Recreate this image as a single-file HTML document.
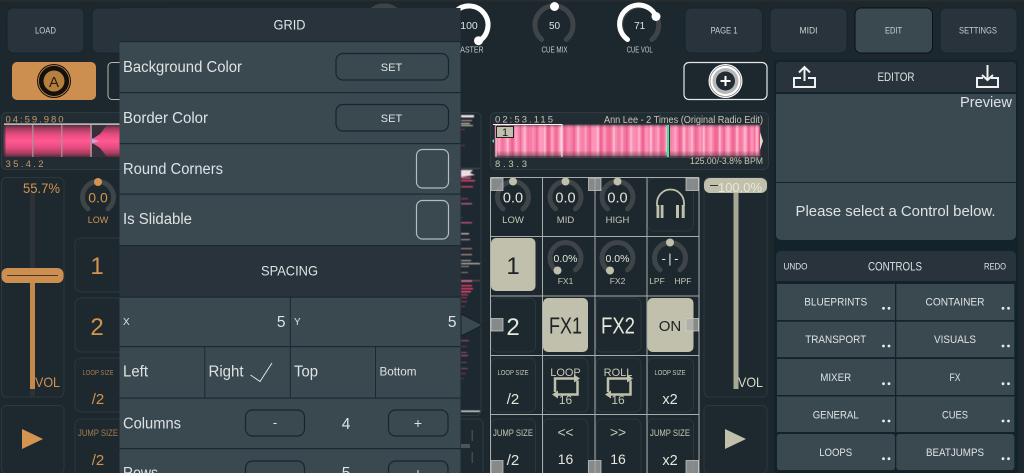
<!DOCTYPE html>
<html><head><meta charset="utf-8"><style>
html,body{margin:0;padding:0;background:#1c272e;width:1024px;height:473px;overflow:hidden}
svg{display:block;font-family:"Liberation Sans",sans-serif}
text{text-anchor:middle;fill:#dde3e3}
.l{text-anchor:start}.r{text-anchor:end}
.o{fill:#d49350}.c{fill:#c6c7b4}
.b{fill:#1e292f;stroke:#2c383e;stroke-width:1}
.t{fill:#29333b;stroke:#15242c;stroke-width:1}
.tt{fill:#c9cfd0;font-size:9.500px}
.sep{fill:#1a2a33}
.cell{fill:#3a4850}
.h{fill:#a9abaa;fill-opacity:.75;stroke:#d0d2cc;stroke-opacity:.7;stroke-width:1}
.ln{stroke:#a8adab;stroke-width:1;fill:none}
.d{fill:#e8ecec}
</style></head><body>
<svg xmlns="http://www.w3.org/2000/svg" width="1024" height="473" viewBox="0 0 1024 473">
<defs>
<linearGradient id="wv" x1="0" y1="0" x2="0" y2="1"><stop offset="0" stop-color="#5a2c3c"/><stop offset=".12" stop-color="#a83e60"/><stop offset=".3" stop-color="#e84c80"/><stop offset=".5" stop-color="#ff5a92"/><stop offset=".7" stop-color="#e84c80"/><stop offset=".88" stop-color="#a83e60"/><stop offset="1" stop-color="#5a2c3c"/></linearGradient>
<linearGradient id="fade" x1="0" y1="0" x2="0" y2="1"><stop offset="0" stop-color="#4a2a38" stop-opacity=".35"/><stop offset=".1" stop-color="#3a2a33" stop-opacity="0"/><stop offset=".8" stop-color="#000" stop-opacity="0"/><stop offset=".93" stop-color="#3a2a33" stop-opacity=".35"/><stop offset="1" stop-color="#2a2228" stop-opacity=".75"/></linearGradient>
<filter id="bl" x="-2%" y="-2%" width="104%" height="104%"><feGaussianBlur stdDeviation=".6"/></filter>
<pattern id="st" width="53" height="40" patternUnits="userSpaceOnUse">
<rect width="53" height="40" fill="#f97fab"/>
<rect x="2" width="2" height="40" fill="#ffb0cb"/><rect x="6" width="1.500" height="40" fill="#ec5f8a"/><rect x="9" width="3" height="40" fill="#ff95b9"/><rect x="14" width="1.500" height="40" fill="#ffc4d6"/><rect x="17" width="2" height="40" fill="#ee5c8a"/><rect x="21" width="2" height="40" fill="#ffa8c5"/><rect x="25" width="3" height="40" fill="#f36a92"/><rect x="30" width="1.500" height="40" fill="#ffc4d6"/><rect x="34" width="2" height="40" fill="#ea6490"/><rect x="38" width="2.500" height="40" fill="#ffa5c3"/><rect x="43" width="1.500" height="40" fill="#e65a82"/><rect x="47" width="2" height="40" fill="#ffb8ce"/><rect x="51" width="1" height="40" fill="#ec7288"/>
</pattern>
<pattern id="st2" width="37" height="40" patternUnits="userSpaceOnUse">
<rect x="3" width="4" height="40" fill="#ffd0de" fill-opacity=".25"/><rect x="13" width="3" height="40" fill="#e04a72" fill-opacity=".25"/><rect x="22" width="5" height="40" fill="#ffd0de" fill-opacity=".2"/><rect x="31" width="2" height="40" fill="#d85070" fill-opacity=".3"/>
</pattern>
<g id="k"><path d="M-10 11.900A15.500 15.500 0 1 1 10 11.900" fill="none" stroke="#3e4447" stroke-width="5" stroke-linecap="round"/></g>
<g id="K"><path d="M-12.200 14.500A19 19 0 1 1 12.200 14.500" fill="none" stroke="#3e4447" stroke-width="5" stroke-linecap="round"/></g>
</defs>

<rect width="1024" height="473" fill="#1c272e"/>
<rect width="1024" height="1.500" fill="#2a2d2e"/>

<!-- top buttons -->
<rect class="t" x="7" y="8" width="77" height="45" rx="6"/><text class="tt" x="45.500" y="33.500" textLength="21" lengthAdjust="spacingAndGlyphs">LOAD</text>
<rect class="t" x="92" y="8" width="77" height="45" rx="6"/>
<rect class="t" x="685" y="8" width="77.500" height="45" rx="6"/><text class="tt" x="724" y="33.500" textLength="27" lengthAdjust="spacingAndGlyphs">PAGE 1</text>
<rect class="t" x="770" y="8" width="77" height="45" rx="6"/><text class="tt" x="808.500" y="33.500" textLength="18" lengthAdjust="spacingAndGlyphs">MIDI</text>
<rect x="855" y="8" width="77.500" height="45" rx="6" fill="#3a4850" stroke="#0c1216"/><text class="tt" x="893.500" y="33.500" textLength="17" lengthAdjust="spacingAndGlyphs">EDIT</text>
<rect class="t" x="940" y="8" width="77" height="45" rx="6"/><text class="tt" x="978" y="33.500" textLength="38" lengthAdjust="spacingAndGlyphs">SETTINGS</text>

<!-- top knobs -->
<use href="#K" x="384" y="25"/>
<use href="#K" x="469" y="25"/>
<path d="M456.800 39.500A19 19 0 1 1 478 41.700" fill="none" stroke="#fff" stroke-width="5" stroke-linecap="round"/>
<circle cx="478.500" cy="40.700" r="4.500" fill="#fff"/>
<text x="469" y="29" font-size="10.500">100</text><text x="469" y="52.500" font-size="8.500" textLength="29" lengthAdjust="spacingAndGlyphs" style="fill:#c9cfd0">MASTER</text>
<use href="#K" x="554" y="25"/><circle cx="554.500" cy="6.500" r="4.500" fill="#fff"/>
<text x="554.500" y="29" font-size="10">50</text><text x="554.500" y="52.500" font-size="8.500" textLength="26" lengthAdjust="spacingAndGlyphs" style="fill:#c9cfd0">CUE MIX</text>
<use href="#K" x="639.700" y="25"/>
<path d="M627.500 39.500A19 19 0 1 1 656 16.500" fill="none" stroke="#fff" stroke-width="5" stroke-linecap="round"/>
<circle cx="656" cy="16.500" r="4.500" fill="#fff"/>
<text x="639.700" y="29" font-size="10">71</text><text x="639.700" y="52.500" font-size="8.500" textLength="26" lengthAdjust="spacingAndGlyphs" style="fill:#c9cfd0">CUE VOL</text>

<!-- deck buttons -->
<rect x="12" y="62" width="84" height="38" rx="5" fill="#cd8f4f"/>
<circle cx="54" cy="81" r="17" fill="#14100c"/><circle cx="54" cy="81" r="15.500" fill="none" stroke="#cd8f4f" stroke-width=".8"/><circle cx="54" cy="81" r="10.500" fill="#b5803f"/>
<text x="54" y="87" font-size="15" style="fill:#2a1c10">A</text>
<rect x="108" y="62.500" width="30" height="37" rx="4" fill="none" stroke="#b9b9a6"/>
<rect x="684" y="62.500" width="83" height="37" rx="5" fill="#1c272e" stroke="#e6e8e8" stroke-width="1.200"/>
<circle cx="725.500" cy="81" r="17" fill="#fff"/><circle cx="725.500" cy="81" r="15.500" fill="none" stroke="#888" stroke-width=".8"/><circle cx="725.500" cy="81" r="13" fill="#b8b8b8"/><circle cx="725.500" cy="81" r="9.500" fill="#222c32"/>
<path d="M725.500 76V86M720.500 81H730.500" stroke="#fff" stroke-width="2"/>

<!-- left waveform -->
<rect x="1.500" y="112.500" width="125" height="57" rx="5" fill="#222d33" stroke="#2f3a40"/>
<rect x="3.500" y="125" width="116" height="32" fill="url(#wv)"/>
<rect x="3.500" y="125" width="2" height="32" fill="#222d33" fill-opacity=".6"/>
<path d="M92 125H107L100 134L93 138.500H92Z" fill="#35303a"/><path d="M92 157H107L100 148L93 143.500H92Z" fill="#35303a"/><path d="M92 138.500L99 141L92 143.500Z" fill="#c4a8e0"/>
<rect x="32.200" y="125" width="1.200" height="32" fill="#a8949c"/><rect x="61.200" y="125" width="1.200" height="32" fill="#a8949c"/><rect x="90.200" y="125" width="1.500" height="32" fill="#a8949c"/>
<rect x="4" y="123.500" width="116" height="1.200" fill="#f0f0f0"/>
<text class="l" x="5.500" y="122.500" font-size="9.500" textLength="58" style="fill:#c79a68">04:59.980</text>
<text class="l" x="5.500" y="167" font-size="9.500" textLength="38" style="fill:#c79a68">35.4.2</text>

<!-- left fader -->
<rect class="b" x="1.500" y="177.500" width="62.500" height="219.500" rx="5"/>
<rect x="30" y="192" width="5" height="205" fill="#2c3236"/>
<rect x="30" y="283" width="5" height="106" fill="#c4894b"/>
<rect x="1.500" y="268" width="62" height="15" rx="6" fill="#cd8f4f"/><rect x="7" y="275" width="51" height="1" fill="#4a3622"/>
<text class="r o" x="60" y="193" font-size="14" textLength="37" lengthAdjust="spacingAndGlyphs">55.7%</text>
<text class="r o" x="60" y="387" font-size="14" textLength="25" lengthAdjust="spacingAndGlyphs">VOL</text>
<rect class="b" x="1.500" y="405.500" width="62.500" height="68" rx="5"/>
<path d="M22 429V449L43 439Z" fill="#d49350"/>

<!-- left column -->
<use href="#k" x="98" y="197"/><circle cx="98" cy="182" r="4" fill="#d49350"/>
<text class="o" x="98" y="202.500" font-size="14">0.0</text><text class="o" x="98" y="223" font-size="9">LOW</text>
<rect class="b" x="75" y="238" width="50" height="54" rx="6"/><text class="o" x="97" y="274" font-size="24">1</text>
<rect class="b" x="75" y="298" width="50" height="54" rx="6"/><text class="o" x="97" y="335" font-size="24">2</text>
<rect class="b" x="75" y="358" width="50" height="54" rx="6"/><text x="98" y="375" font-size="7.500" textLength="31" lengthAdjust="spacingAndGlyphs" style="fill:#a57d50">LOOP SIZE</text><text class="o" x="98" y="404" font-size="15">/2</text>
<rect class="b" x="75" y="419" width="50" height="60" rx="6"/><text x="98" y="436" font-size="9.500" textLength="40" lengthAdjust="spacingAndGlyphs" style="fill:#a57d50">JUMP SIZE</text><text class="o" x="98" y="465" font-size="15">/2</text>

<!-- vertical strip -->
<rect x="450" y="112.500" width="31" height="303" rx="5" fill="#1d2830" stroke="#2f3a40"/>
<g filter="url(#bl)">
<rect x="461" y="115" width="13" height="2.500" fill="#e8e0e2"/><rect x="461" y="120" width="11" height="1.200" fill="#c08a9e"/><rect x="461" y="123" width="9" height="1.200" fill="#cfc0b4"/><rect x="461" y="125" width="12" height="1.200" fill="#b8b89c"/><rect x="461" y="129" width="4" height="1" fill="#7a3f55"/><rect x="461" y="145" width="4" height="1" fill="#6a3a4c"/>
<rect x="461" y="168" width="19" height="1" fill="#4a4f52"/><path d="M461 170H473L470 173L475 175L461 177Z" fill="#f2dbe6"/><rect x="461" y="177" width="10" height="2" fill="#b04d70"/><rect x="461" y="180" width="14" height="1.500" fill="#e83c62"/><rect x="461" y="186" width="12" height="1.500" fill="#bc4668"/>
<rect x="461" y="198" width="7" height="1.500" fill="#7a3a55"/><rect x="461" y="203" width="11" height="1.500" fill="#b0587c"/><rect x="461" y="217" width="2" height="1" fill="#5a3a4a"/><rect x="461" y="222" width="11" height="1.500" fill="#b84e7c"/>
<rect x="461" y="233" width="8" height="1.500" fill="#b8b09c"/><rect x="461" y="239" width="9" height="1.200" fill="#b08c94"/><rect x="461" y="248" width="11" height="1.200" fill="#b0788e"/><rect x="461" y="254" width="11" height="1.200" fill="#bc9484"/><rect x="461" y="260" width="10" height="1.200" fill="#b4a490"/><rect x="461" y="263" width="19" height="1.200" fill="#c4c6bc"/><rect x="461" y="266" width="8" height="1" fill="#a8947e"/><rect x="461" y="272" width="7" height="1" fill="#9a8072"/>
<rect x="461" y="280" width="19" height="1.500" fill="#5c4450"/><rect x="461" y="280" width="11" height="2" fill="#c26a8a"/><rect x="461" y="285" width="11" height="1.500" fill="#f0365c"/><rect x="461" y="288" width="12" height="1.500" fill="#e83c64"/><rect x="461" y="291" width="10" height="1.500" fill="#e84e78"/><rect x="461" y="294" width="7" height="1.500" fill="#a83a5a"/><rect x="461" y="297" width="6" height="1.500" fill="#7a3550"/><rect x="461" y="301" width="6" height="1.200" fill="#8a3a58"/><rect x="461" y="306" width="4" height="1" fill="#7a3a55"/>
<rect x="461" y="340" width="8" height="1.200" fill="#a0466a"/><rect x="461" y="346" width="6" height="1" fill="#6a3a4c"/><rect x="461" y="352" width="6" height="1" fill="#9a4a6a"/><rect x="461" y="355" width="7" height="1.200" fill="#a84f72"/><rect x="461" y="362" width="6" height="1" fill="#8a4060"/><rect x="461" y="368" width="7" height="1" fill="#9a4a6a"/><rect x="461" y="373" width="5" height="1" fill="#7a3a55"/><rect x="461" y="378" width="3" height="1" fill="#5a3a4a"/>
<rect x="461" y="410.500" width="19" height="1.500" fill="#d4d6d0"/>
</g>
<path d="M461 314L483 325L461 336Z" fill="#3a4850" stroke="#14232b" stroke-width="1"/>
<rect x="455" y="419" width="28" height="60" rx="5" fill="#1e292f" stroke="#2f3b41"/>
<rect x="471.500" y="430" width="1.500" height="11" fill="#44494c"/><rect x="471.500" y="452" width="1.500" height="11" fill="#44494c"/><rect x="461" y="444" width="9" height="4" fill="#4d5458"/>

<!-- right waveform -->
<rect x="490.500" y="112.500" width="278" height="57" rx="5" fill="#222d33" stroke="#2f3a40"/>
<g filter="url(#bl)"><rect x="495" y="125" width="265" height="32" fill="url(#st)"/><rect x="495" y="125" width="265" height="32" fill="url(#st2)"/></g>
<rect x="495" y="125" width="265" height="32" fill="url(#fade)"/>
<rect x="667" y="125" width="2" height="32" fill="#43e59a"/><rect x="669" y="125" width="1" height="32" fill="#26343a"/>
<path d="M760 132L763 141L760 150Z" fill="#e8d8c8"/><path d="M494 139L492 141L494 143Z" fill="#6fd0d8"/>
<rect x="495.500" y="124" width="1" height="33" fill="#e6e6e0"/><rect x="561.500" y="124" width="1" height="33" fill="#f4f4f0"/><rect x="493" y="124" width="69" height="1" fill="#f4f4f0"/>
<rect x="496.500" y="126.500" width="17" height="11" fill="#c0c0ac" stroke="#222"/><text x="505" y="136" font-size="11" style="fill:#1a1e20">1</text>
<text class="l c" x="495" y="122.500" font-size="9.500" textLength="58">02:53.115</text>
<text class="r c" x="763" y="123" font-size="10" textLength="159" lengthAdjust="spacingAndGlyphs">Ann Lee - 2 Times (Original Radio Edit)</text>
<text class="l c" x="495" y="167" font-size="9.500" textLength="32">8.3.3</text>
<text class="r c" x="763" y="164" font-size="9" textLength="73" lengthAdjust="spacingAndGlyphs">125.00/-3.8% BPM</text>

<!-- right grid -->
<use href="#k" x="513" y="197"/><circle cx="513" cy="181.500" r="4" fill="#c0c0ac"/><text x="513" y="202.500" font-size="14.500" style="fill:#e4e6da">0.0</text><text class="c" x="513" y="223" font-size="9.500">LOW</text>
<use href="#k" x="565.500" y="197"/><circle cx="565.500" cy="181.500" r="4" fill="#c0c0ac"/><text x="565.500" y="202.500" font-size="14.500" style="fill:#e4e6da">0.0</text><text class="c" x="565.500" y="223" font-size="9.500">MID</text>
<use href="#k" x="617.500" y="197"/><circle cx="617.500" cy="181.500" r="4" fill="#c0c0ac"/><text x="617.500" y="202.500" font-size="14.500" style="fill:#e4e6da">0.0</text><text class="c" x="617.500" y="223" font-size="9.500">HIGH</text>
<rect class="b" x="647.500" y="178" width="46" height="53" rx="6"/>
<path d="M657 206V203A13.500 13.500 0 0 1 684 203V206" fill="none" stroke="#c0c0ac" stroke-width="1.800"/>
<rect x="656.500" y="205" width="2.800" height="13" fill="#c0c0ac"/><rect x="660.700" y="205" width="2.800" height="13" fill="#c0c0ac"/><rect x="676" y="205" width="3" height="13" fill="#c0c0ac"/><rect x="681.700" y="205" width="3" height="13" fill="#c0c0ac"/>

<rect x="491" y="238" width="44.500" height="53" rx="5" fill="#c0c0ac"/><text x="513" y="274" font-size="24" style="fill:#1c2226">1</text>
<use href="#k" x="565.500" y="258"/><circle cx="557.500" cy="270.500" r="4" fill="#c0c0ac"/><text x="565.500" y="262" font-size="10.500" style="fill:#e4e6da">0.0%</text><text class="c" x="565.500" y="284" font-size="8.500">FX1</text>
<use href="#k" x="617.500" y="258"/><circle cx="610" cy="270.500" r="4" fill="#c0c0ac"/><text x="617.500" y="262" font-size="10.500" style="fill:#e4e6da">0.0%</text><text class="c" x="617.500" y="284" font-size="8.500">FX2</text>
<use href="#k" x="670" y="258"/><circle cx="670" cy="242.500" r="4" fill="#c0c0ac"/><text x="670" y="263" font-size="13" textLength="17" style="fill:#e4e6da">-|-</text><text class="c" x="657" y="284" font-size="8.500">LPF</text><text class="c" x="683" y="284" font-size="8.500">HPF</text>

<rect class="b" x="491" y="298" width="44.500" height="54" rx="6"/><text x="513" y="335" font-size="24" style="fill:#e6e8da">2</text>
<rect x="543" y="298" width="45" height="54" rx="5" fill="#c0c0ac"/><text x="565.500" y="333.500" font-size="23" textLength="33" lengthAdjust="spacingAndGlyphs" style="fill:#1c2226">FX1</text>
<rect class="b" x="596" y="298" width="45" height="54" rx="6"/><text x="618" y="333.500" font-size="23" textLength="34" lengthAdjust="spacingAndGlyphs" style="fill:#e6e8da">FX2</text>
<rect x="647.500" y="298" width="46" height="54" rx="5" fill="#c0c0ac"/><text x="670" y="331" font-size="15" style="fill:#1c2226">ON</text>

<rect class="b" x="491" y="358" width="44.500" height="54" rx="6"/><text class="c" x="513" y="375" font-size="7.500" textLength="31" lengthAdjust="spacingAndGlyphs">LOOP SIZE</text><text x="513" y="404" font-size="15" style="fill:#e4e6da">/2</text>
<rect class="b" x="543" y="358" width="45" height="54" rx="6"/><text class="c" x="565.500" y="376" font-size="11">LOOP</text><text class="c" x="565.500" y="404" font-size="12">16</text>
<rect class="b" x="596" y="358" width="45" height="54" rx="6"/><text class="c" x="618" y="376" font-size="11">ROLL</text><text class="c" x="618" y="404" font-size="12">16</text>
<rect class="b" x="647.500" y="358" width="46" height="54" rx="6"/><text class="c" x="670" y="375" font-size="7.500" textLength="31" lengthAdjust="spacingAndGlyphs">LOOP SIZE</text><text x="670" y="404" font-size="14.500" style="fill:#e4e6da">x2</text>
<g fill="none" stroke="#c0c0ac" stroke-width="2.500"><path d="M555 392V378.500H575"/><path d="M577.500 380.500V394.500H557"/><path d="M608 392V378.500H628"/><path d="M630.500 380.500V394.500H610"/></g>
<g fill="#c0c0ac"><path d="M574 374.500L580 378.500L574 382.500Z"/><path d="M558 390.500L552 394.500L558 398.500Z"/><path d="M627 374.500L633 378.500L627 382.500Z"/><path d="M611 390.500L605 394.500L611 398.500Z"/></g>

<rect class="b" x="491" y="419" width="44.500" height="60" rx="6"/><text class="c" x="513" y="436" font-size="9.500" textLength="40" lengthAdjust="spacingAndGlyphs">JUMP SIZE</text><text x="513" y="465" font-size="15" style="fill:#e4e6da">/2</text>
<rect class="b" x="543" y="419" width="45" height="60" rx="6"/><text class="c" x="565.500" y="437" font-size="14" textLength="16">&lt;&lt;</text><text x="565.500" y="464" font-size="14" style="fill:#e4e6da">16</text>
<rect class="b" x="596" y="419" width="45" height="60" rx="6"/><text class="c" x="618" y="437" font-size="14" textLength="16">&gt;&gt;</text><text x="618" y="464" font-size="14" style="fill:#e4e6da">16</text>
<rect class="b" x="647.500" y="419" width="46" height="60" rx="6"/><text class="c" x="670" y="436" font-size="9.500" textLength="40" lengthAdjust="spacingAndGlyphs">JUMP SIZE</text><text x="670" y="465" font-size="14.500" style="fill:#e4e6da">x2</text>

<g class="ln">
<path d="M490.500 177.500H699M490.500 236.500H699M490.500 296H699M490.500 355.500H699M490.500 414.500H699"/>
<path d="M490.500 177.500V473M542.500 177.500V473M595 177.500V473M647 177.500V473M699 177.500V473"/>
</g>
<rect class="h" x="491" y="178" width="12" height="12.500"/><rect class="h" x="588.500" y="178" width="12.500" height="12.500"/><rect class="h" x="686" y="178" width="12.500" height="12.500"/>
<rect class="h" x="491" y="318.500" width="12" height="12.500"/><rect class="h" x="686" y="318.500" width="12.500" height="12.500"/>
<rect class="h" x="491" y="460.500" width="12" height="13"/><rect class="h" x="588.500" y="460.500" width="12.500" height="13"/><rect class="h" x="686" y="460.500" width="12.500" height="13"/>

<!-- right fader -->
<rect class="b" x="704" y="177.500" width="63" height="219.500" rx="5"/>
<rect x="733.500" y="192" width="5" height="197" fill="#a8a896"/>
<rect x="704" y="178" width="63" height="15" rx="6" fill="#c0c0ac"/><rect x="710" y="185" width="8" height="1" fill="#333"/>
<text x="740" y="192" font-size="13" textLength="44" lengthAdjust="spacingAndGlyphs" style="fill:#e6e8da">100.0%</text>
<text class="r" x="763" y="387" font-size="14" textLength="25" lengthAdjust="spacingAndGlyphs" style="fill:#d8dacc">VOL</text>
<rect class="b" x="704" y="405.500" width="63" height="68" rx="5"/>
<path d="M725 429V449L746 439Z" fill="#c0c0ac"/>

<!-- editor -->
<rect x="774" y="60" width="244" height="413" fill="#13232b"/>
<path d="M776 92V66a4 4 0 0 1 4-4H1012a4 4 0 0 1 4 4V92Z" fill="#29333b"/>
<rect x="776" y="94" width="240" height="88" fill="#3a4850"/>
<path d="M776 183H1016V235a5 5 0 0 1-5 5H781a5 5 0 0 1-5-5Z" fill="#3a4850"/>
<text x="896" y="81" font-size="11.500" textLength="37" lengthAdjust="spacingAndGlyphs">EDITOR</text>
<g fill="none" stroke="#f0f2f2" stroke-width="2"><path d="M801 78H794V87H815V78H808"/><path d="M804.500 81V67M799 72.500L804.500 67L810 72.500"/><path d="M983 78H977V87H998V78H991"/><path d="M987.500 65V80M982 75L987.500 80L993 75"/></g>
<text class="r" x="1012" y="107" font-size="15" textLength="52" lengthAdjust="spacingAndGlyphs">Preview</text>
<text x="895.500" y="216" font-size="15" textLength="200" lengthAdjust="spacingAndGlyphs">Please select a Control below.</text>

<!-- controls -->
<path d="M776 281V256a5 5 0 0 1 5-5H1011a5 5 0 0 1 5 5V281Z" fill="#29333b"/>
<text x="795.500" y="269.500" font-size="9" textLength="24" lengthAdjust="spacingAndGlyphs">UNDO</text>
<text x="895" y="270.500" font-size="11.500" textLength="54" lengthAdjust="spacingAndGlyphs">CONTROLS</text>
<text x="995" y="269.500" font-size="9" textLength="22" lengthAdjust="spacingAndGlyphs">REDO</text>
<g class="cell">
<rect x="777" y="284" width="118" height="36"/><rect x="896.300" y="284" width="118" height="36"/>
<rect x="777" y="321.700" width="118" height="35.500"/><rect x="896.300" y="321.700" width="118" height="35.500"/>
<rect x="777" y="359" width="118" height="36"/><rect x="896.300" y="359" width="118" height="36"/>
<rect x="777" y="396.500" width="118" height="35.500"/><rect x="896.300" y="396.500" width="118" height="35.500"/>
<rect x="777" y="434" width="118" height="36" rx="3"/><rect x="896.300" y="434" width="118" height="36" rx="3"/>
</g>
<g font-size="11">
<text x="835.700" y="305.500" textLength="63" lengthAdjust="spacingAndGlyphs">BLUEPRINTS</text><text x="955" y="305.500" textLength="59" lengthAdjust="spacingAndGlyphs">CONTAINER</text>
<text x="835.700" y="343" textLength="61" lengthAdjust="spacingAndGlyphs">TRANSPORT</text><text x="955" y="343" textLength="42" lengthAdjust="spacingAndGlyphs">VISUALS</text>
<text x="835.700" y="381" textLength="31" lengthAdjust="spacingAndGlyphs">MIXER</text><text x="955" y="381" textLength="11" lengthAdjust="spacingAndGlyphs">FX</text>
<text x="835.700" y="418.500" textLength="46" lengthAdjust="spacingAndGlyphs">GENERAL</text><text x="955" y="418.500" textLength="26" lengthAdjust="spacingAndGlyphs">CUES</text>
<text x="835.700" y="456" textLength="33" lengthAdjust="spacingAndGlyphs">LOOPS</text><text x="955" y="456" textLength="58" lengthAdjust="spacingAndGlyphs">BEATJUMPS</text>
</g>
<g class="d">
<circle cx="883.500" cy="308.300" r="1.400"/><circle cx="889" cy="308.300" r="1.400"/><circle cx="1003" cy="308.300" r="1.400"/><circle cx="1008.500" cy="308.300" r="1.400"/>
<circle cx="883.500" cy="346" r="1.400"/><circle cx="889" cy="346" r="1.400"/><circle cx="1003" cy="346" r="1.400"/><circle cx="1008.500" cy="346" r="1.400"/>
<circle cx="883.500" cy="383.700" r="1.400"/><circle cx="889" cy="383.700" r="1.400"/><circle cx="1003" cy="383.700" r="1.400"/><circle cx="1008.500" cy="383.700" r="1.400"/>
<circle cx="883.500" cy="421" r="1.400"/><circle cx="889" cy="421" r="1.400"/><circle cx="1003" cy="421" r="1.400"/><circle cx="1008.500" cy="421" r="1.400"/>
<circle cx="883.500" cy="458.700" r="1.400"/><circle cx="889" cy="458.700" r="1.400"/><circle cx="1003" cy="458.700" r="1.400"/><circle cx="1008.500" cy="458.700" r="1.400"/>
</g>

<!-- GRID panel -->
<path d="M119.500 473V11a3 3 0 0 1 3-3H460.500V473Z" fill="#3a4850"/>
<path d="M119.500 41V11a3 3 0 0 1 3-3H460.500V41Z" fill="#29333b"/>
<rect x="119.500" y="246" width="341" height="50.500" fill="#29333b"/>
<g class="sep">
<rect x="119.500" y="41" width="341" height="1.200"/><rect x="119.500" y="92" width="341" height="1.200"/><rect x="119.500" y="143" width="341" height="1.200"/><rect x="119.500" y="193.500" width="341" height="1.200"/><rect x="119.500" y="245" width="341" height="1.200"/><rect x="119.500" y="296.500" width="341" height="1.200"/><rect x="119.500" y="346" width="341" height="1.200"/><rect x="119.500" y="397.500" width="341" height="1.200"/><rect x="119.500" y="448" width="341" height="1.200"/>
<rect x="289.800" y="297" width="1" height="101"/><rect x="204.300" y="347" width="1" height="51"/><rect x="375" y="347" width="1" height="51"/>
</g>
<text x="289.500" y="29.500" font-size="14" textLength="32" lengthAdjust="spacingAndGlyphs">GRID</text>
<text x="289.500" y="275.500" font-size="14" textLength="57" lengthAdjust="spacingAndGlyphs">SPACING</text>
<g font-size="15.500">
<text class="l" x="123" y="72" textLength="119" lengthAdjust="spacingAndGlyphs">Background Color</text>
<text class="l" x="123" y="123" textLength="85" lengthAdjust="spacingAndGlyphs">Border Color</text>
<text class="l" x="123" y="174" textLength="100" lengthAdjust="spacingAndGlyphs">Round Corners</text>
<text class="l" x="123" y="224" textLength="69" lengthAdjust="spacingAndGlyphs">Is Slidable</text>
<text class="l" x="123" y="376.500" textLength="25" lengthAdjust="spacingAndGlyphs">Left</text>
<text class="l" x="208.500" y="376.500" textLength="35" lengthAdjust="spacingAndGlyphs">Right</text>
<text class="l" x="294" y="376.500" textLength="24" lengthAdjust="spacingAndGlyphs">Top</text>
<text class="l" x="123" y="428.500" textLength="58" lengthAdjust="spacingAndGlyphs">Columns</text>
<text class="l" x="123" y="478" textLength="35" lengthAdjust="spacingAndGlyphs">Rows</text>
<text x="346" y="429">4</text><text x="346" y="478">5</text>
<text class="r" x="285.500" y="327">5</text><text class="r" x="456.500" y="327">5</text>
</g>
<text class="l" x="123" y="325" font-size="10">X</text><text class="l" x="294" y="325" font-size="10">Y</text>
<text class="l" x="379.500" y="375.500" font-size="11.500" textLength="37" lengthAdjust="spacingAndGlyphs">Bottom</text>
<path d="M250.500 375L260 381.500L272 363" fill="none" stroke="#dde3e3" stroke-width="1"/>
<g fill="#3a4850" stroke="#16262f" stroke-width="1.200">
<rect x="336" y="53.500" width="112.500" height="26.500" rx="7"/><rect x="336" y="104.500" width="112.500" height="26.500" rx="7"/>
<rect x="245.500" y="410" width="59" height="26" rx="7"/><rect x="388.500" y="410" width="59.500" height="26" rx="7"/>
<rect x="245.500" y="461" width="59" height="26" rx="7"/><rect x="388.500" y="461" width="59.500" height="26" rx="7"/>
</g>
<text x="391.500" y="71" font-size="11">SET</text><text x="391.500" y="122" font-size="11">SET</text>
<text x="275" y="427" font-size="13">-</text><text x="418" y="428" font-size="14">+</text><text x="418" y="478" font-size="14">+</text>
<g fill="none" stroke="#b4bcbe" stroke-width="1.200"><rect x="416.500" y="149.500" width="32" height="38.500" rx="6"/><rect x="416.500" y="200.500" width="32" height="38.500" rx="6"/></g>
</svg>
</body></html>
